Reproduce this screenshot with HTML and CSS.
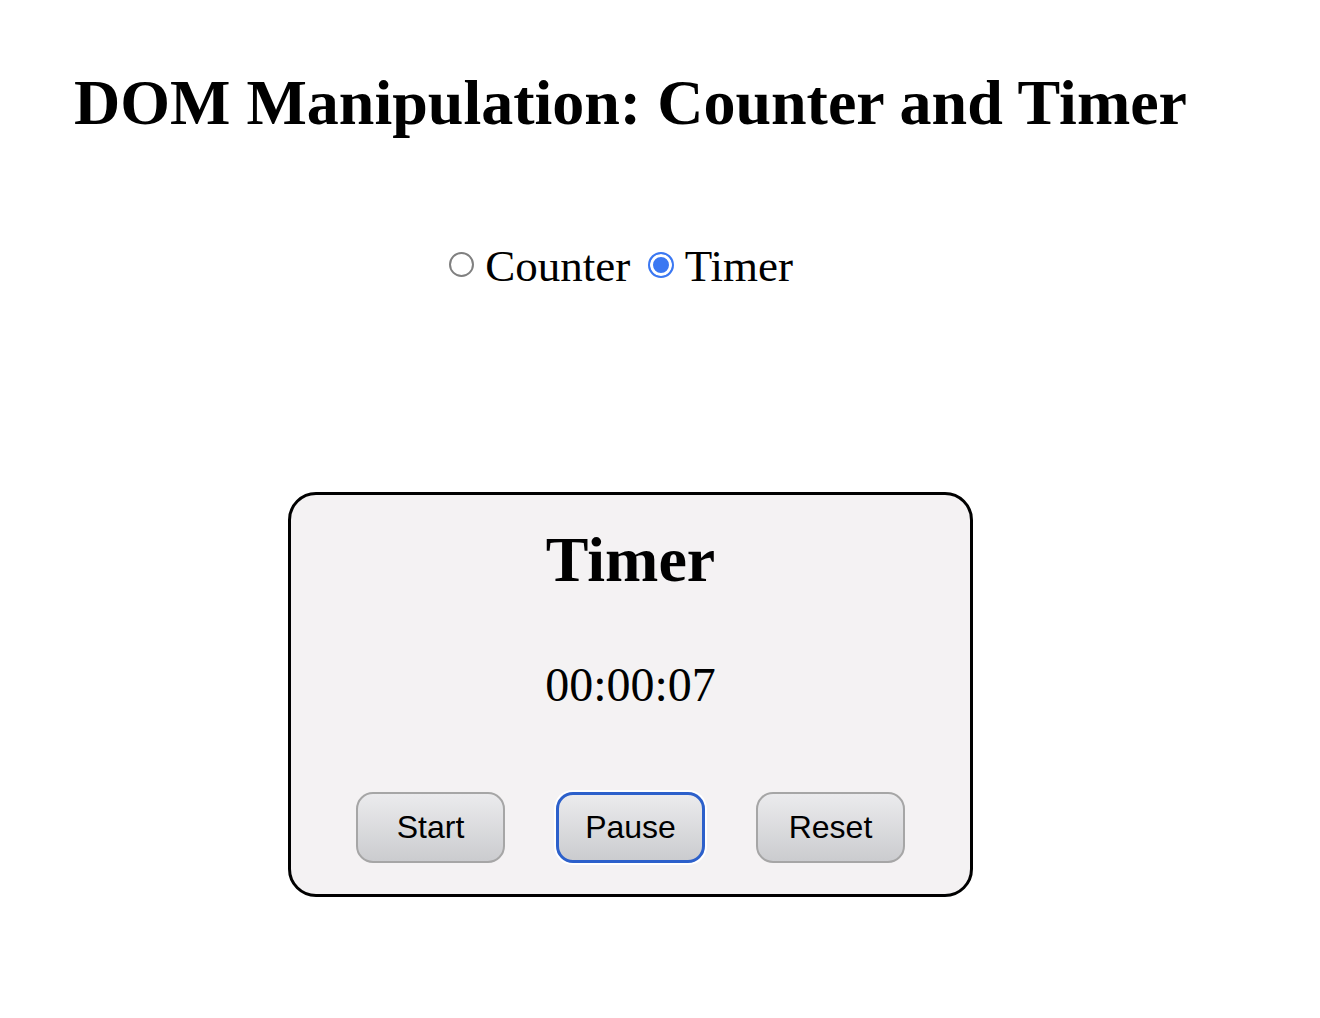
FILE: index.html
```html
<!DOCTYPE html>
<html>
<head>
<meta charset="utf-8">
<title>DOM Manipulation: Counter and Timer</title>
<link rel="stylesheet" href="styles.css">
</head>
<body>
<div class="page">
  <h1 class="title">DOM Manipulation: Counter and Timer</h1>
  <div class="modes">
    <label class="mode"><input type="radio" name="mode" class="radio"> Counter</label>
    <label class="mode"><input type="radio" name="mode" class="radio" checked> Timer</label>
  </div>
  <div class="card">
    <h2 class="card-title">Timer</h2>
    <div class="time">00:00:07</div>
    <div class="buttons">
      <button class="btn">Start</button>
      <button class="btn btn-focus">Pause</button>
      <button class="btn">Reset</button>
    </div>
  </div>
</div>
</body>
</html>
```
FILE: styles.css
```css
html, body {
  margin: 0;
  padding: 0;
  background: #ffffff;
}
body {
  font-family: "Liberation Serif", "Times New Roman", serif;
  color: #000;
  padding: 66px 0 0 75px;
}
.page {
  width: 1111px;
  display: flex;
  flex-direction: column;
  align-items: center;
}
.title {
  margin: 0;
  font-size: 64px;
  font-weight: bold;
  line-height: normal;
  white-space: nowrap;
}
.modes {
  margin-top: 101px;
  padding-right: 19px;
  display: flex;
  align-items: center;
  font-size: 45px;
  line-height: 1.15;
}
.mode {
  display: flex;
  align-items: center;
  white-space: pre;
}
.mode + .mode {
  margin-left: 18px;
}
.radio {
  appearance: none;
  -webkit-appearance: none;
  margin: 0;
  width: 25px;
  height: 25px;
  border-radius: 50%;
  border: 2px solid #808080;
  background: #fff;
  box-sizing: border-box;
  position: relative;
  top: -2px;
}
.radio:checked {
  width: 26px;
  height: 26px;
  border: 2.5px solid #3b78f2;
  background: #3b78f2;
  box-shadow: inset 0 0 0 3px #fff;
}
.card {
  margin-top: 199px;
  width: 685px;
  box-sizing: border-box;
  border: 3px solid #000;
  border-radius: 28px;
  background: #f4f2f3;
  padding: 28px 0 31px;
  display: flex;
  flex-direction: column;
  align-items: center;
}
.card-title {
  margin: 0;
  font-size: 64px;
  font-weight: bold;
  line-height: 1.15;
}
.time {
  margin-top: 61px;
  font-size: 48px;
  line-height: 1.15;
}
.buttons {
  margin-top: 79px;
  display: flex;
  gap: 51px;
}
.btn {
  width: 149px;
  height: 71px;
  box-sizing: border-box;
  border: 2px solid #a6a6a6;
  border-radius: 17px;
  background: linear-gradient(#ebebed, #cbcccf);
  font-family: "Liberation Sans", Arial, sans-serif;
  font-size: 32px;
  color: #000;
  padding: 0;
}
.btn-focus {
  border: 3px solid #2c60cb;
  box-shadow: 0 0 0 2px #ffffff;
}
```
